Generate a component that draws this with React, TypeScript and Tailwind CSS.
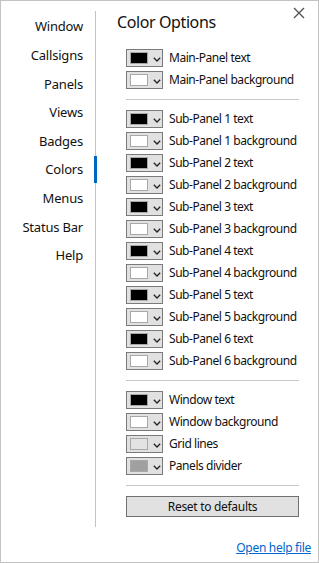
import React from "react";

const navItems = ["Window", "Callsigns", "Panels", "Views", "Badges", "Colors", "Menus", "Status Bar", "Help"];

type Row = { label: string; color: string };

const mainRows: Row[] = [
  { label: "Main-Panel text", color: "#000000" },
  { label: "Main-Panel background", color: "#ffffff" },
];

const subRows: Row[] = [1, 2, 3, 4, 5, 6].flatMap((n) => [
  { label: `Sub-Panel ${n} text`, color: "#000000" },
  { label: `Sub-Panel ${n} background`, color: "#ffffff" },
]);

const winRows: Row[] = [
  { label: "Window text", color: "#000000" },
  { label: "Window background", color: "#ffffff" },
  { label: "Grid lines", color: "#e3e3e3" },
  { label: "Panels divider", color: "#a0a0a0" },
];

function Swatch({ color }: { color: string }) {
  return (
    <div className="w-[37px] h-[18px] border border-[#7a7a7a] bg-[#e1e1e1] flex items-center pl-[3px] shrink-0">
      <div className="w-[18px] h-[12px] border border-[#a8a8a8]" style={{ backgroundColor: color }} />
      <svg width="8" height="5" viewBox="0 0 8 5" className="ml-[5px] mt-[2px]">
        <path d="M0.8 0.8 L4 4 L7.2 0.8" fill="none" stroke="#222" strokeWidth="1.3" />
      </svg>
    </div>
  );
}

function ColorRow({ row }: { row: Row }) {
  return (
    <div className="h-[22px] flex items-center">
      <Swatch color={row.color} />
      <span className="ml-[6px] text-[12px] tracking-[-0.45px] text-[#111] leading-none whitespace-nowrap">
        {row.label}
      </span>
    </div>
  );
}

export default function App() {
  return (
    <div
      className="w-[319px] h-[563px] border border-[#c3c3c3] bg-white flex flex-col relative overflow-hidden"
      style={{ fontFamily: '"Segoe UI", "Noto Sans", sans-serif' }}
    >
      <div className="flex h-[526px]">
        <nav className="w-[94px] shrink-0 pt-[11.7px] flex flex-col">
          {navItems.map((item) => (
            <div key={item} className="h-[28.6px] flex items-center justify-end pr-[12px] relative">
              <span className="text-[13px] tracking-[-0.2px] text-[#111] leading-none whitespace-nowrap">{item}</span>
              {item === "Colors" && (
                <div className="absolute right-[-2px] top-[0.5px] w-[3px] h-[27px] bg-[#0067c0]" />
              )}
            </div>
          ))}
        </nav>
        <div className="w-px shrink-0 mt-[10px] bg-[#c3c3c3]" />
        <div className="flex-1 min-w-0 flex flex-col">
          <div className="mt-[10px] pl-[21px] h-[22px] flex items-center text-[16px] tracking-[-0.4px] text-[#111] leading-none">
            Color Options
          </div>
          <div className="pl-[30px] pr-[19px] flex flex-col">
            <div className="mt-[14px]">
              {mainRows.map((r) => (
                <ColorRow key={r.label} row={r} />
              ))}
            </div>
            <div className="mt-[8px] h-px bg-[#c8c8c8]" />
            <div className="mt-[8px]">
              {subRows.map((r) => (
                <ColorRow key={r.label} row={r} />
              ))}
            </div>
            <div className="mt-[8px] h-px bg-[#c8c8c8]" />
            <div className="mt-[8px]">
              {winRows.map((r) => (
                <ColorRow key={r.label} row={r} />
              ))}
            </div>
            <div className="mt-[8px] h-px bg-[#c8c8c8]" />
            <button className="mt-[10px] h-[21px] border border-[#707070] bg-[#e1e1e1] text-[12px] tracking-[-0.3px] text-[#111] leading-none flex items-center justify-center">
              Reset to defaults
            </button>
          </div>
        </div>
      </div>
      <div className="mt-[13px] flex justify-end pr-[7px]">
        <a className="text-[12px] tracking-[-0.3px] leading-[16px] text-[#0066cc] underline cursor-pointer">Open help file</a>
      </div>
      <button className="absolute top-[5px] right-[12px] w-[14px] h-[14px] flex items-center justify-center">
        <svg width="12" height="12" viewBox="0 0 12 12">
          <path d="M1 1 L11 11 M11 1 L1 11" stroke="#555" strokeWidth="1.4" fill="none" />
        </svg>
      </button>
    </div>
  );
}
